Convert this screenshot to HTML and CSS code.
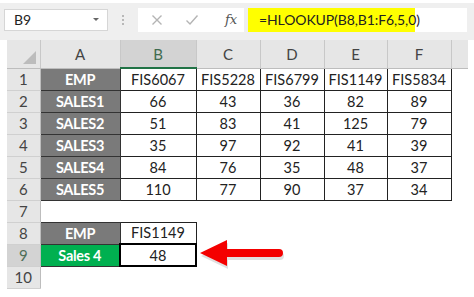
FILE: index.html
```html
<!DOCTYPE html>
<html>
<head>
<meta charset="utf-8">
<link rel="stylesheet" href="styles.css">
</head>
<body>
<div class="toolbar">
  <div class="namebox"><span>B9</span><span class="caret"></span></div>
  <div class="grip"><i></i><i></i><i></i></div>
  <div class="fxbox">
    <svg class="ic" width="12" height="12" viewBox="0 0 12 12"><path d="M1.5 1.5 L10.5 10.5 M10.5 1.5 L1.5 10.5" stroke="#b4b4b4" stroke-width="1.4" fill="none"/></svg>
    <svg class="ic" width="14" height="12" viewBox="0 0 14 12"><path d="M1.5 6.5 L5 10 L12.5 1.5" stroke="#b4b4b4" stroke-width="1.4" fill="none"/></svg>
    <span class="fx">fx</span>
  </div>
  <div class="formula"><span class="hl">=HLOOKUP(B8,B1:F6,5,0)</span></div>
</div>
<div class="sheet">
  <table class="grid">
    <colgroup>
      <col class="c-rh"><col class="c-a"><col class="c-b"><col class="c-n"><col class="c-n"><col class="c-e"><col class="c-n"><col class="c-x">
    </colgroup>
    <tr class="hdr">
      <th class="corner"><span class="tri"></span></th><th>A</th><th class="sel">B</th><th>C</th><th>D</th><th>E</th><th>F</th><th class="blank"></th>
    </tr>
    <tr><th class="rh">1</th><td class="lab">EMP</td><td class="d">FIS6067</td><td class="d">FIS5228</td><td class="d">FIS6799</td><td class="d">FIS1149</td><td class="d">FIS5834</td><td></td></tr>
    <tr><th class="rh">2</th><td class="lab">SALES1</td><td class="d">66</td><td class="d">43</td><td class="d">36</td><td class="d">82</td><td class="d">89</td><td></td></tr>
    <tr><th class="rh">3</th><td class="lab">SALES2</td><td class="d">51</td><td class="d">83</td><td class="d">41</td><td class="d">125</td><td class="d">79</td><td></td></tr>
    <tr><th class="rh">4</th><td class="lab">SALES3</td><td class="d">35</td><td class="d">97</td><td class="d">92</td><td class="d">41</td><td class="d">39</td><td></td></tr>
    <tr><th class="rh">5</th><td class="lab">SALES4</td><td class="d">84</td><td class="d">76</td><td class="d">35</td><td class="d">48</td><td class="d">37</td><td></td></tr>
    <tr><th class="rh">6</th><td class="lab">SALES5</td><td class="d">110</td><td class="d">77</td><td class="d">90</td><td class="d">37</td><td class="d">34</td><td></td></tr>
    <tr><th class="rh">7</th><td></td><td></td><td></td><td></td><td></td><td></td><td></td></tr>
    <tr><th class="rh">8</th><td class="lab">EMP</td><td class="d">FIS1149</td><td></td><td></td><td></td><td></td><td></td></tr>
    <tr><th class="rh rsel">9</th><td class="lab green">Sales 4</td><td class="d active">48</td><td></td><td></td><td></td><td></td><td></td></tr>
    <tr><th class="rh">10</th><td></td><td></td><td></td><td></td><td></td><td></td><td></td></tr>
  </table>
  <svg class="arrow" width="90" height="34" viewBox="0 0 90 34">
    <path d="M1 14 L28 1 L28 10 L80 10 A4 4 0 0 1 80 18 L28 18 L28 27 Z" fill="#000" opacity="0.12" transform="translate(1,3)"/>
    <path d="M1 14 L28 1 L28 10 L80 10 A4 4 0 0 1 80 18 L28 18 L28 27 Z" fill="#f40000"/>
  </svg>
</div>
</body>
</html>
```
FILE: styles.css
```css
html, body {
  margin: 0;
  padding: 0;
  background: #ffffff;
  width: 474px;
  height: 297px;
  overflow: hidden;
  font-family: Lato, "Open Sans", sans-serif;
}
.toolbar {
  display: flex;
  align-items: center;
  height: 37px;
  margin-top: 3px;
  background: #efefef;
  padding-left: 4px;
}
.namebox {
  width: 104px;
  height: 22px;
  background: #fff;
  border: 1px solid #d6d6d6;
  display: flex;
  align-items: center;
  justify-content: space-between;
  padding: 0 8px 0 9px;
  box-sizing: border-box;
  font-size: 14px;
  color: #222;
  margin-top: -4px;
}
.caret {
  width: 0;
  height: 0;
  border-left: 3px solid transparent;
  border-right: 3px solid transparent;
  border-top: 3px solid #666;
}
.grip {
  width: 30px;
  display: flex;
  flex-direction: column;
  align-items: center;
  gap: 2px;
  margin-top: -4px;
}
.grip i {
  width: 2px;
  height: 2px;
  background: #b8b8b8;
  display: block;
}
.fxbox {
  width: 106px;
  height: 24px;
  background: #fff;
  display: flex;
  align-items: center;
  box-sizing: border-box;
  padding-left: 13px;
  gap: 22px;
  margin-top: -4px;
}
.ic { display: block; }
.fx {
  font-family: "DejaVu Serif", "Liberation Serif", serif;
  font-style: italic;
  font-size: 13px;
  color: #555;
  margin-left: 4px;
}
.formula {
  margin-left: 4px;
  width: 219px;
  height: 24px;
  background: #fff;
  margin-top: -4px;
  display: flex;
}
.hl {
  background: #ffff00;
  width: 167px;
  box-sizing: border-box;
  padding-left: 11px;
  line-height: 24px;
  font-size: 14px;
  color: #222;
  letter-spacing: -0.1px;
  white-space: nowrap;
}
.sheet {
  position: relative;
  padding-left: 7px;
}
.grid {
  border-collapse: collapse;
  table-layout: fixed;
  width: 461px;
}
.c-rh { width: 33px; }
.c-a { width: 80px; }
.c-b { width: 76px; }
.c-n { width: 64px; }
.c-e { width: 63px; }
.c-x { width: 17px; }
.grid th, .grid td {
  padding: 0;
  text-align: center;
  white-space: nowrap;
  overflow: hidden;
}
.grid tr { height: 22px; }
.grid tr.hdr { height: 28px; }
.hdr th {
  background: #e6e6e6;
  font-weight: normal;
  font-size: 15px;
  color: #444;
  border-right: 1px solid #c8c8c8;
  border-bottom: 1px solid #bdbdbd;
}
.hdr th.sel {
  background: #d3d3d3;
  color: #3f6b4f;
  border-bottom: 2px solid #217346;
}
.hdr th.blank { border-right: none; }
.corner { position: relative; }
.tri {
  position: absolute;
  right: 4px;
  bottom: 4px;
  width: 0;
  height: 0;
  border-left: 13px solid transparent;
  border-bottom: 13px solid #bcbcbc;
}
.rh {
  background: #e6e6e6;
  font-weight: normal;
  font-size: 15px;
  color: #444;
  border-bottom: 1px solid #d0d0d0;
  border-right: 1px solid #bdbdbd;
}
.rh.rsel {
  background: #d3d3d3;
  color: #4f6f5a;
}
.lab {
  background: #7a7a7a;
  color: #fff;
  font-weight: bold;
  font-size: 14.5px;
  letter-spacing: -0.3px;
  border: 1px solid #333;
}
.lab.green { background: #00b050; }
.d {
  background: #fff;
  color: #222;
  font-size: 14.5px;
  border: 1px solid #222;
}
.d.active { border: 2px solid #000; }
.arrow {
  position: absolute;
  left: 199px;
  top: 199px;
}
```
